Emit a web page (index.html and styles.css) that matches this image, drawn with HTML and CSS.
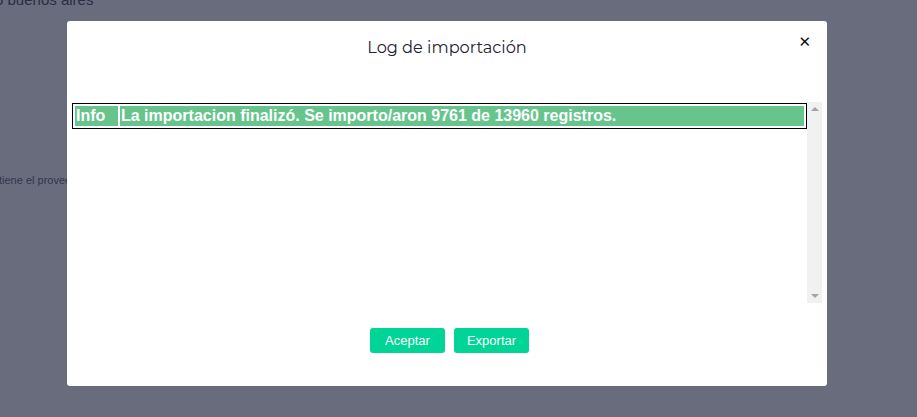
FILE: index.html
```html
<!DOCTYPE html>
<html>
<head>
<meta charset="utf-8">
<link rel="stylesheet" href="styles.css">
</head>
<body>
<div class="page">
  <div class="page-line first">o buenos aires</div>
  <div class="page-line small">tiene el proveedor</div>
</div>
<div class="overlay"></div>
<div class="modal">
  <div class="modal-header">
    <h2 class="modal-title">Log de importación</h2>
    <span class="modal-close">&#x2715;</span>
  </div>
  <div class="modal-body">
    <div class="log-scroll">
      <div class="log-content">
        <table class="log-table">
          <tr>
            <td class="log-type">Info</td>
            <td class="log-msg">La importacion finalizó. Se importo/aron 9761 de 13960 registros.</td>
          </tr>
        </table>
      </div>
      <div class="scrollbar">
        <span class="arrow up"></span>
        <span class="arrow down"></span>
      </div>
    </div>
  </div>
  <div class="modal-footer">
    <button class="btn">Aceptar</button>
    <button class="btn">Exportar</button>
  </div>
</div>
</body>
</html>
```
FILE: styles.css
```css
html, body {
  margin: 0;
  padding: 0;
  height: 100%;
  background: #ffffff;
  overflow: hidden;
}
.page {
  font-family: "Liberation Sans", Arial, sans-serif;
  color: #4a4d5c;
}
.page-line.first {
  font-size: 15px;
  line-height: 17px;
  margin-top: -9px;
  margin-left: -5px;
  color: #2c2f3a;
}
.page-line.small {
  font-size: 11px;
  line-height: 14px;
  margin-top: 165px;
  margin-left: -1px;
}
.overlay {
  position: fixed;
  inset: 0;
  background: rgba(40, 45, 70, 0.7);
}
.modal {
  position: fixed;
  left: 67px;
  top: 21px;
  width: 760px;
  height: 365px;
  background: #ffffff;
  border-radius: 3px;
  display: flex;
  flex-direction: column;
  box-sizing: border-box;
}
.modal-header {
  position: relative;
  height: 81px;
  display: flex;
  justify-content: center;
}
.modal-title {
  margin: 15px 0 0 0;
  font-family: "Montserrat", "Open Sans", sans-serif;
  font-weight: 400;
  font-size: 16.2px;
  line-height: 22px;
  color: #1f2233;
}
.modal-close {
  position: absolute;
  right: 16px;
  top: 12px;
  font-family: "DejaVu Sans", sans-serif;
  font-size: 15px;
  font-weight: bold;
  color: #111;
}
.modal-body {
  padding: 0 5px;
}
.log-scroll {
  height: 201px;
  display: flex;
}
.log-content {
  flex: 1;
  padding-top: 1px;
}
.log-table {
  width: 100%;
  border: 1px solid #000;
  border-spacing: 2px;
  font-family: "Liberation Sans", Arial, sans-serif;
  font-weight: bold;
  font-size: 16px;
  color: #fff;
}
.log-table td {
  background: #66c48c;
  padding: 0 1px;
  height: 20px;
  line-height: 20px;
  white-space: nowrap;
}
.log-type {
  width: 41px;
}
.scrollbar {
  width: 15px;
  background: #f1f1f1;
  display: flex;
  flex-direction: column;
  justify-content: space-between;
  align-items: center;
  padding: 5px 0;
  box-sizing: border-box;
}
.arrow {
  width: 0;
  height: 0;
  border-left: 4px solid transparent;
  border-right: 4px solid transparent;
}
.arrow.up {
  border-bottom: 4px solid #a3a3a3;
}
.arrow.down {
  border-top: 4px solid #a3a3a3;
}
.modal-footer {
  display: flex;
  justify-content: center;
  gap: 9px;
  margin-top: 25px;
  padding-left: 5px;
}
.btn {
  width: 75px;
  height: 25px;
  border: none;
  border-radius: 3px;
  background: #00d496;
  color: #fff;
  font-family: "Liberation Sans", Arial, sans-serif;
  font-size: 13px;
  padding: 0;
}
```
